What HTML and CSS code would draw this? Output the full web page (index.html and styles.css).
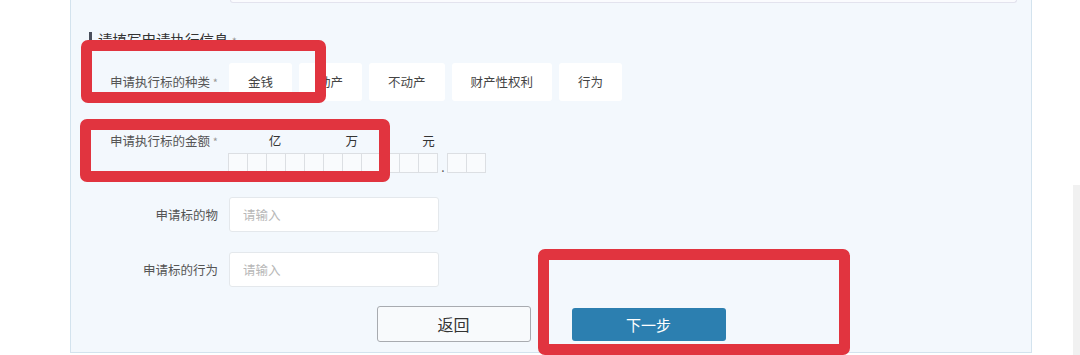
FILE: index.html
```html
<!DOCTYPE html>
<html lang="zh-CN">
<head>
    <meta charset="UTF-8">
    <meta name="viewport" content="width=device-width, initial-scale=1.0">
    <title>申请执行信息</title>
    <link rel="stylesheet" href="styles.css">
</head>
<body>
    <div class="panel">
        <div class="top-field"></div>

        <h3 class="section-title">请填写申请执行信息 <span class="req">*</span></h3>

        <div class="row">
            <label class="label">申请执行标的种类 <span class="req">*</span></label>
            <div class="options">
                <span class="option">金钱</span>
                <span class="option">动产</span>
                <span class="option">不动产</span>
                <span class="option">财产性权利</span>
                <span class="option">行为</span>
            </div>
        </div>

        <div class="row row-amount">
            <label class="label">申请执行标的金额 <span class="req">*</span></label>
            <div class="amount">
                <div class="units">
                    <span class="u-yi">亿</span>
                    <span class="u-wan">万</span>
                    <span class="u-yuan">元</span>
                </div>
                <div class="cells">
                    <span class="cell"></span><span class="cell"></span><span class="cell"></span>
                    <span class="cell"></span><span class="cell"></span><span class="cell"></span>
                    <span class="cell"></span><span class="cell"></span><span class="cell"></span>
                    <span class="cell"></span><span class="cell"></span>
                    <span class="dot">.</span>
                    <span class="cell"></span><span class="cell"></span>
                </div>
            </div>
        </div>

        <div class="row row-input">
            <label class="label">申请标的物</label>
            <input type="text" class="field" placeholder="请输入">
        </div>

        <div class="row row-input row-last">
            <label class="label">申请标的行为</label>
            <input type="text" class="field" placeholder="请输入">
        </div>

        <div class="actions">
            <button class="btn btn-back">返回</button>
            <button class="btn btn-next">下一步</button>
        </div>

        <!-- annotation boxes -->
        <div class="mark mark-kind"></div>
        <div class="mark mark-amount"></div>
        <div class="mark mark-next"></div>
    </div>
    <div class="scroll-edge"></div>
</body>
</html>
```

FILE: styles.css
```css
body {
    margin: 0;
    background-color: #ffffff;
    font-family: "Noto Sans CJK SC", "Noto Sans", sans-serif;
    display: flex;
    height: 355px;
    overflow: hidden;
}

.panel {
    position: relative;
    box-sizing: border-box;
    margin-left: 70px;
    width: 962px;
    height: 353px;
    background-color: #f3f8fd;
    border-left: 1px solid #d3e3ee;
    border-right: 1px solid #d3e3ee;
    border-bottom: 1px solid #d3e3ee;
}

.top-field {
    margin-left: 159px;
    width: 785px;
    height: 2px;
    background-color: #fafbfe;
    border: 1px solid #e3e3ee;
    border-top: none;
    border-radius: 0 0 6px 6px;
}

.section-title {
    margin: 29px 0 0 18px;
    padding-left: 6px;
    border-left: 3px solid #4a4f5c;
    font-size: 14.5px;
    line-height: 16px;
    font-weight: normal;
    color: #333;
}

.req {
    color: #999;
    font-size: 11px;
}

.row {
    display: flex;
    align-items: center;
    margin-top: 14px;
}

.label {
    width: 147px;
    flex-shrink: 0;
    margin-right: 11px;
    text-align: right;
    font-size: 12.5px;
    line-height: 16px;
    color: #555;
}

.options {
    display: flex;
    gap: 7px;
}

.option {
    height: 38px;
    line-height: 38px;
    padding: 0 19px;
    background-color: #ffffff;
    border-radius: 3px;
    font-size: 12.5px;
    color: #444;
}

.row-amount {
    align-items: flex-start;
    margin-top: 32px;
}

.units {
    display: grid;
    grid-template-columns: repeat(11, 19.2px);
    height: 16px;
    font-size: 12.5px;
    line-height: 16px;
    color: #333;
    margin-left: -2px;
}

.u-yi { grid-column: 3; text-align: center; }
.u-wan { grid-column: 7; text-align: center; }
.u-yuan { grid-column: 11; text-align: center; }

.cells {
    display: flex;
    align-items: flex-end;
    margin-top: 4px;
}

.cell {
    box-sizing: border-box;
    width: 20px;
    height: 20px;
    margin-left: -1px;
    border: 1px solid #dcdfe3;
    background-color: #f9fbfd;
}

.dot {
    width: 10px;
    text-align: center;
    font-size: 12px;
    line-height: 12px;
    color: #555;
}

.row-input {
    margin-top: 24px;
}

.row-last {
    margin-top: 20px;
}

.field {
    box-sizing: border-box;
    width: 210px;
    height: 35px;
    padding: 0 13px;
    background-color: #ffffff;
    border: 1px solid #e4e8ec;
    border-radius: 3px;
    font-family: inherit;
    font-size: 12.5px;
    outline: none;
}

.field::placeholder {
    color: #b8b8b8;
}

.actions {
    display: flex;
    justify-content: center;
    align-items: center;
    gap: 41px;
    margin-top: 19px;
}

.btn {
    width: 154px;
    font-family: inherit;
    border-radius: 3px;
    cursor: pointer;
}

.btn-back {
    height: 36px;
    background-color: #f8fafc;
    border: 1px solid #a8abb0;
    font-size: 16px;
    color: #333;
}

.btn-next {
    height: 33px;
    background-color: #2c7fb0;
    border: none;
    font-size: 15px;
    color: #ffffff;
}

.mark {
    position: absolute;
    box-sizing: border-box;
    border: 11px solid #e1343f;
    border-radius: 7px;
}

.mark-kind {
    left: 10px;
    top: 40px;
    width: 245px;
    height: 63px;
}

.mark-amount {
    left: 9px;
    top: 119px;
    width: 310px;
    height: 63px;
}

.mark-next {
    left: 467px;
    top: 249px;
    width: 312px;
    height: 106px;
}

.scroll-edge {
    margin-left: auto;
    margin-top: 185px;
    width: 7px;
    height: 170px;
    background-color: #f1f1f1;
}
```
